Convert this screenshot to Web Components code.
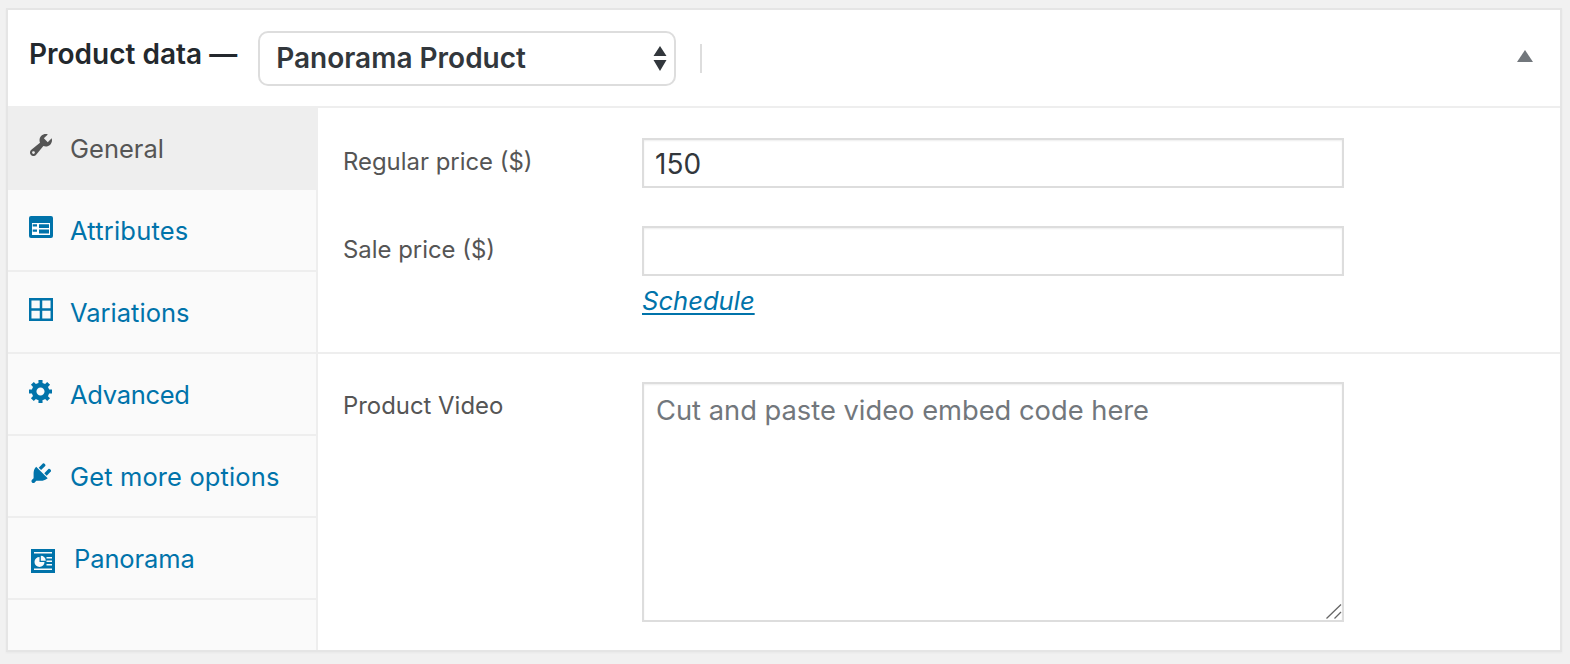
<!DOCTYPE html>
<html><head><meta charset="utf-8"><title>Product data</title>
<style>
html,body{margin:0;background:#f1f1f1}
body{padding:8px 8px 12px 6px;font-family:Inter,"Noto Sans",sans-serif;-webkit-font-smoothing:antialiased}
</style></head>
<body>
<template id="t-panel"><style>
:host{display:block;box-sizing:border-box;width:1556px;height:644px;background:#fff;border:2px solid #e5e5e5;box-shadow:0 1px 2px rgba(0,0,0,.04)}
.body{display:flex;height:542px}
</style>
<slot name="header"></slot><div class="body"><slot name="tabs"></slot><slot name="main"></slot></div></template>

<template id="t-header"><style>
:host{display:flex;align-items:center;box-sizing:border-box;height:98px;border-bottom:2px solid #eee;padding:0 27px 0 21px;color:#23282d}
h2{margin:0 21px 7px 0;font:600 28px/1.2 Inter,sans-serif;white-space:nowrap}
.sel{position:relative;display:block}
select{appearance:none;-webkit-appearance:none;display:block;box-sizing:border-box;width:418px;height:55px;margin:0;padding:0 40px 0 16px;border:2px solid #ddd;border-radius:10px;background:#fff;color:#32373c;font:600 28px Inter,sans-serif;outline:none}
.arrows{position:absolute;right:9px;top:14px;pointer-events:none}
.sep{width:2px;height:29px;background:#ddd;margin:0 0 0 24px}
.tri{margin-left:auto;margin-bottom:4px;display:block}
</style>
<h2><slot name="title"></slot></h2>
<span class="sel"><select aria-label="Product type"><option>Panorama Product</option></select>
<svg class="arrows" width="14" height="27" viewBox="0 0 14 27"><path d="M7 1l6.500 10H.5zM.5 15h13L7 26z" fill="#32373c"/></svg></span>
<span class="sep"></span>
<svg class="tri" width="16" height="12" viewBox="0 0 16 12"><path d="M8 0l8 12H0z" fill="#72777c"/></svg></template>

<template id="t-tabs"><style>
:host{display:block;box-sizing:content-box;width:308px;background:#fafafa;border-right:2px solid #eee;flex:none}
</style><slot></slot></template>

<template id="t-tab"><style>
:host{display:flex;align-items:center;box-sizing:border-box;height:82px;border-bottom:2px solid #eee;padding-left:var(--pad,21px);color:#0073aa;font:400 25.500px/1.2 Inter,sans-serif;letter-spacing:var(--ls,0)}
:host([active]){background:#eee;color:#555;border-bottom-color:#eee}
.i{display:flex;width:var(--iw,42px);flex:none;margin-top:var(--im,-6px)}
.t{margin-top:var(--tm,2px)}
::slotted(svg){display:block}
</style><span class="i"><slot name="icon"></slot></span><span class="t"><slot></slot></span></template>

<template id="t-main"><style>
:host{display:block;flex:1;min-width:0}
</style><slot></slot></template>

<template id="t-section"><style>
:host{display:block}
:host(.a){height:246px;box-sizing:border-box;padding-top:30px;border-bottom:2px solid #eee}
:host(.b){padding-top:28px}
</style><slot></slot></template>

<template id="t-field"><style>
:host{display:flex;padding-left:25px;margin-bottom:38px;color:#555;font:400 23.900px/1.2 Inter,sans-serif}
.l{width:299px;flex:none;padding-top:var(--lt,10px)}
.c{width:702px}
</style>
<div class="l"><slot name="label"></slot></div><div class="c"><slot name="control"></slot><slot></slot></div></template>

<template id="t-input"><style>
:host{display:block}
input{display:block;box-sizing:border-box;width:100%;height:50px;margin:0;padding:2px 11px 0;border:2px solid #ddd;background:#fff;box-shadow:inset 0 1px 2px rgba(0,0,0,.07);color:#32373c;outline:none;font:400 28px Inter,sans-serif}
</style><input></template>

<template id="t-area"><style>
:host{display:block;position:relative}
textarea{display:block;box-sizing:border-box;width:100%;height:240px;margin:0;padding:10px 12px;line-height:1.25;resize:none;border:2px solid #ddd;background:#fff;box-shadow:inset 0 1px 2px rgba(0,0,0,.07);color:#32373c;outline:none;font:400 27.300px Inter,sans-serif}
textarea::placeholder{color:#72777c;opacity:1}
.grip{position:absolute;right:2px;bottom:2px;pointer-events:none}
</style><textarea></textarea>
<svg class="grip" width="16" height="17" viewBox="0 0 16 17"><path d="M.5 15.500L15 1.500M8.500 15.500L15 9" fill="none" stroke="#666" stroke-width="1.300"/></svg></template>

<template id="t-link"><style>
:host{display:block;margin-top:10px;font:italic 400 25.600px/1.2 Inter,sans-serif}
a{color:#0073aa;text-decoration:underline;text-underline-offset:3px}
</style><a href="#"><slot></slot></a></template>

<script>
function def(name,tid,after){customElements.define(name,class extends HTMLElement{
  constructor(){super();this.attachShadow({mode:'open'}).appendChild(document.getElementById(tid).content.cloneNode(true));}
  connectedCallback(){if(after)after(this);}
});}
def('product-panel','t-panel');
def('panel-header','t-header');
def('tab-list','t-tabs');
def('tab-item','t-tab');
def('panel-main','t-main');
def('form-section','t-section');
def('form-field','t-field');
def('text-box','t-input',el=>{const i=el.shadowRoot.querySelector('input');i.value=el.getAttribute('value')||'';i.setAttribute('aria-label',el.getAttribute('label')||'');});
def('area-box','t-area',el=>{const t=el.shadowRoot.querySelector('textarea');t.placeholder=el.getAttribute('placeholder')||'';t.setAttribute('aria-label',el.getAttribute('label')||'');});
def('sched-link','t-link');
</script>

<product-panel>
  <panel-header slot="header"><span slot="title">Product data —</span></panel-header>
  <tab-list slot="tabs">
    <tab-item active style="--pad:22px;--iw:40px"><svg slot="icon" width="22" height="22" viewBox="2 2 16 16" fill="#555"><path d="M16.68 9.77c-1.34 1.34-3.3 1.67-4.95.99l-5.41 6.52c-.99.99-2.59.99-3.58 0s-.99-2.59 0-3.57l6.52-5.42c-.68-1.65-.35-3.61.99-4.95 1.28-1.28 3.12-1.62 4.72-1.06l-2.89 2.89 2.82 2.82 2.86-2.87c.53 1.58.18 3.39-1.08 4.67zM3.81 16.21c.4.39 1.04.39 1.43 0 .4-.4.4-1.04 0-1.43-.39-.4-1.03-.4-1.43 0-.39.39-.39 1.03 0 1.43z"/></svg>General</tab-item>
    <tab-item style="--iw:41px;--ls:.2px"><svg slot="icon" width="24" height="22" viewBox="0 0 24 22"><rect width="24" height="22" rx="2" fill="#0073aa"/><rect x="3" y="7" width="18" height="12" fill="#fff"/><path d="M3.700 8.300H8v2.200H3.700zM3.700 13.500H8v2.200H3.700zM10 8.300h10v3.700H10zM10 13.500h10v4H10z" fill="#0073aa"/></svg>Attributes</tab-item>
    <tab-item style="--iw:41px"><svg slot="icon" width="24" height="23" viewBox="0 0 24 23"><path d="M1.200 1.200h21.600v20.600H1.200zM12 1v21M1 11.500h22" fill="none" stroke="#0073aa" stroke-width="2.500"/></svg>Variations</tab-item>
    <tab-item style="--iw:41px;--ls:-.3px"><svg slot="icon" width="23" height="23" viewBox="1 2 17 17" fill="#0073aa"><path d="M18 12h-2.180c-.17.7-.44 1.350-.81 1.930l1.540 1.540-2.100 2.100-1.540-1.540c-.58.36-1.230.63-1.910.79V19H8v-2.180c-.68-.16-1.330-.43-1.910-.79l-1.540 1.540-2.120-2.120 1.540-1.540c-.36-.58-.63-1.230-.79-1.910H1V9.030h2.170c.16-.7.44-1.350.8-1.940L2.430 5.550l2.100-2.100 1.540 1.540c.58-.37 1.240-.64 1.930-.81V2h3v2.180c.68.16 1.330.43 1.910.79l1.540-1.540 2.120 2.120-1.540 1.540c.36.59.64 1.240.8 1.940H18V12zm-8.500 1.500c1.660 0 3-1.340 3-3s-1.340-3-3-3-3 1.340-3 3 1.340 3 3 3z"/></svg>Advanced</tab-item>
    <tab-item style="--pad:23px;--iw:39px;--ls:.13px"><svg slot="icon" width="20" height="20" viewBox="2.300 2.100 15 15.600" fill="#0073aa"><path d="M13.110 4.360L9.870 7.600 8 5.730l3.240-3.240c.35-.34 1.050-.2 1.560.32.52.51.66 1.210.31 1.550zm-8 1.770l.91-1.120 9.010 9.010-1.190.84c-.71.71-2.630 1.160-3.820 1.160H6.140L4.900 17.260c-.59.59-1.540.59-2.120 0-.59-.58-.59-1.530 0-2.120l1.240-1.240v-3.880c0-1.130.4-3.190 1.090-3.890zm7.260 3.970l3.240-3.240c.34-.35 1.040-.21 1.550.31.52.51.66 1.210.31 1.550l-3.240 3.250z"/></svg>Get more options</tab-item>
    <tab-item style="--pad:23px;--iw:43px;--im:6px;--tm:3px;--ls:-.1px"><svg slot="icon" width="24" height="24" viewBox="0 0 24 24"><path fill="#0073aa" fill-rule="evenodd" d="M0 0h24v24H0zM3 3v1.500h18V3zM3 19.500V21h18v-1.500zM8.500 8a5 5 0 1 0 5 5H8.500zM9.800 6.700v5h5a5 5 0 0 0-5-5zM15.500 8v1.500H21V8zM15.500 11.500V13H21v-1.500zM15.500 15v1.500H21V15z"/></svg>Panorama</tab-item>
  </tab-list>
  <panel-main slot="main">
    <form-section class="a">
      <form-field><span slot="label">Regular price ($)</span><text-box slot="control" value="150" label="Regular price ($)"></text-box></form-field>
      <form-field style="margin-bottom:0"><span slot="label">Sale price ($)</span><text-box slot="control" label="Sale price ($)"></text-box><sched-link>Schedule</sched-link></form-field>
    </form-section>
    <form-section class="b">
      <form-field style="margin-bottom:0"><span slot="label">Product Video</span><area-box slot="control" label="Product Video" placeholder="Cut and paste video embed code here"></area-box></form-field>
    </form-section>
  </panel-main>
</product-panel>
</body></html>
